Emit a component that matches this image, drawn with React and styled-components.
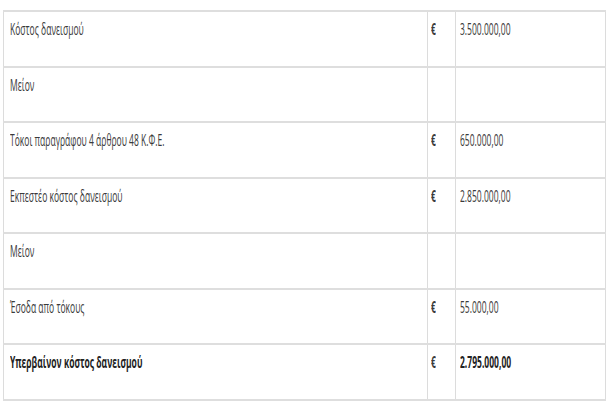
import styled, { createGlobalStyle } from "styled-components";

const Global = createGlobalStyle`
    body {
        margin: 0;
        background: #fff;
        font-family: 'Open Sans', 'Noto Sans', sans-serif;
    }
`;

const Page = styled.div`
    padding: 10px 7px 0 3px;
`;

const Table = styled.table`
    width: 602px;
    border-collapse: collapse;
    table-layout: fixed;
    border-left: 1px solid #dcdcdc;
    border-right: 1px solid #dcdcdc;
`;

const Row = styled.tr`
    height: 55.5px;
    border-top: 2px solid #dedede;
    border-bottom: 2px solid #dedede;
`;

const Cell = styled.td`
    vertical-align: top;
    padding: 6px 0 0 ${(p) => p.$pad || 6}px;
    border-left: 1px solid #dcdcdc;
    overflow: hidden;
    white-space: nowrap;
`;

const Text = styled.span`
    display: inline-block;
    font-size: 15.5px;
    line-height: 20px;
    color: ${(p) => (p.$bold ? "#222" : "#3a3a3a")};
    font-weight: ${(p) => (p.$bold || p.$cur ? 700 : 400)};
    transform: scaleX(0.55);
    transform-origin: left center;
`;

const rows = [
    ["Κόστος δανεισμού", "€", "3.500.000,00"],
    ["Μείον", "", ""],
    ["Τόκοι παραγράφου 4 άρθρου 48 Κ.Φ.Ε.", "€", "650.000,00"],
    ["Εκπεστέο κόστος δανεισμού", "€", "2.850.000,00"],
    ["Μείον", "", ""],
    ["Έσοδα από τόκους", "€", "55.000,00"],
    ["Υπερβαίνον κόστος δανεισμού", "€", "2.795.000,00", true],
];

function App() {
    return (
        <>
            <Global />
            <Page>
                <Table>
                    <colgroup>
                        <col style={{ width: 424 }} />
                        <col style={{ width: 28 }} />
                        <col style={{ width: 150 }} />
                    </colgroup>
                    <tbody>
                        {rows.map(([label, cur, amount, bold], i) => (
                            <Row key={i}>
                                <Cell>
                                    <Text $bold={bold}>{label}</Text>
                                </Cell>
                                <Cell $pad={3}>
                                    <Text $cur>{cur}</Text>
                                </Cell>
                                <Cell $pad={4}>
                                    <Text $bold={bold}>{amount}</Text>
                                </Cell>
                            </Row>
                        ))}
                    </tbody>
                </Table>
            </Page>
        </>
    );
}

export default App;
